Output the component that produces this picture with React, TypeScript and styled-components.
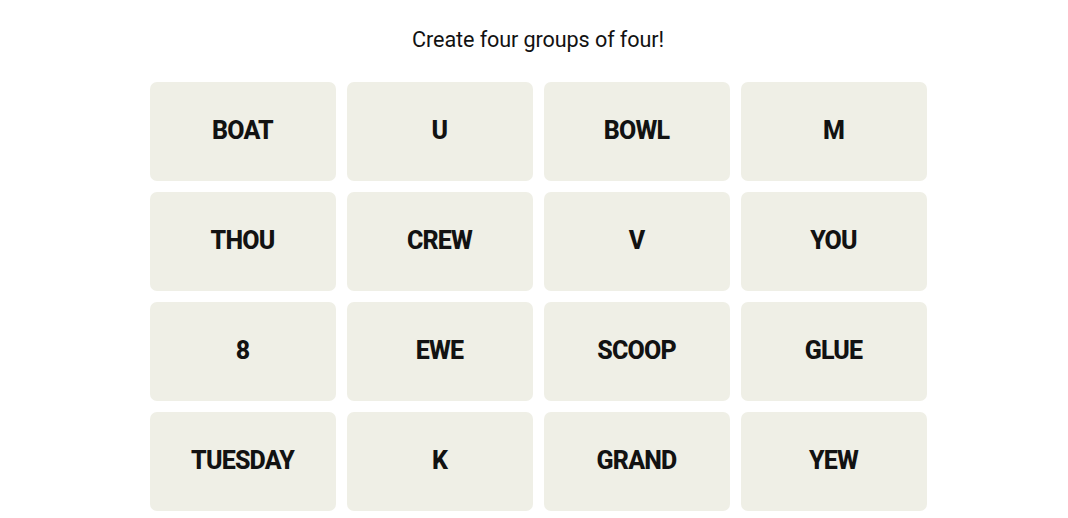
import React from 'react'
import styled, { createGlobalStyle } from 'styled-components'

const words = [
  'BOAT', 'U', 'BOWL', 'M',
  'THOU', 'CREW', 'V', 'YOU',
  '8', 'EWE', 'SCOOP', 'GLUE',
  'TUESDAY', 'K', 'GRAND', 'YEW',
]

const GlobalStyle = createGlobalStyle`
  body {
    margin: 0;
    background: #ffffff;
    font-family: Roboto, 'Liberation Sans', sans-serif;
    color: #121212;
  }
`

const Page = styled.div`
  width: 1068px;
  height: 518px;
  overflow: hidden;
  display: flex;
  flex-direction: column;
  align-items: center;
  padding-left: 8px;
  box-sizing: border-box;
`

const Title = styled.h2`
  margin: 0;
  height: 82px;
  padding-bottom: 3px;
  box-sizing: border-box;
  display: flex;
  align-items: center;
  font-size: 21.6px;
  font-weight: 400;
  letter-spacing: -0.1px;
  color: #121212;
`

const Board = styled.div`
  display: grid;
  grid-template-columns: repeat(4, 186px);
  grid-auto-rows: 99px;
  gap: 11px;
`

const Tile = styled.button`
  border: none;
  border-radius: 7px;
  background: #efefe6;
  display: flex;
  align-items: center;
  justify-content: center;
  font-family: Roboto, 'Liberation Sans', sans-serif;
  font-size: 25px;
  font-weight: 800;
  letter-spacing: -0.8px;
  color: #121212;
  text-transform: uppercase;
  cursor: pointer;
  padding: 0 0 2px;
`

const App: React.FC = () => {
  return (
    <>
      <GlobalStyle />
      <Page>
        <Title>Create four groups of four!</Title>
        <Board>
          {words.map((w) => (
            <Tile key={w}>{w}</Tile>
          ))}
        </Board>
      </Page>
    </>
  )
}

export default App
